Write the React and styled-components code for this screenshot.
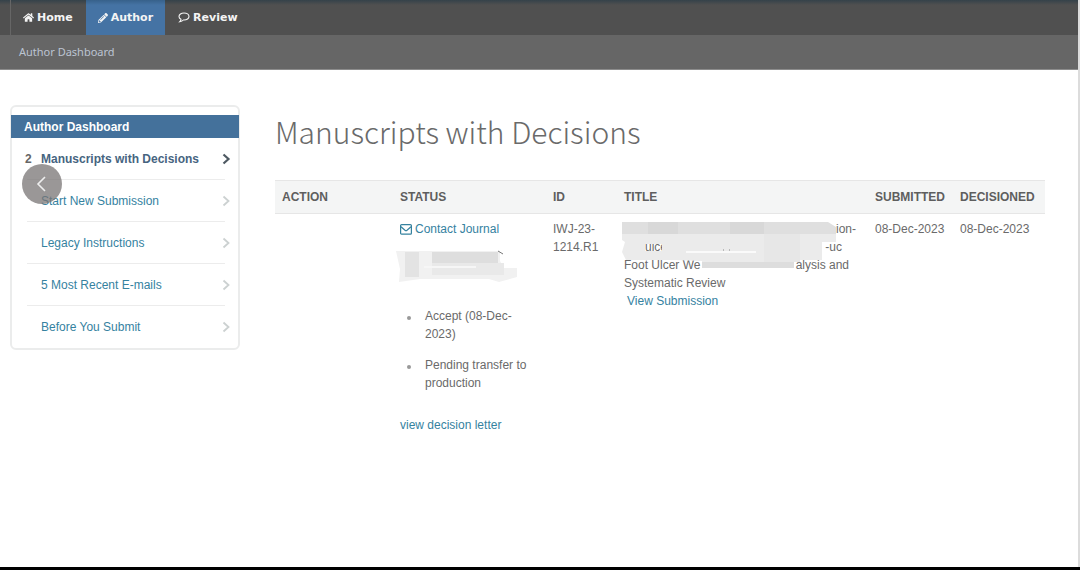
import React from 'react';
import styled, { createGlobalStyle } from 'styled-components';
import { FaHome, FaPencilAlt } from 'react-icons/fa';

const GlobalStyle = createGlobalStyle`
  * {
    box-sizing: border-box;
  }

  body {
    margin: 0;
    background: #fff;
    color: #6a6a6a;
    font: 12px/18px "Liberation Sans", Arial, sans-serif;
  }

  a {
    color: #35829f;
    text-decoration: none;
  }
`;

const Page = styled.div`
  min-height: 100vh;
  display: flex;
  flex-direction: column;
  border-bottom: 3px solid #000;
`;

const Screen = styled.div`
  flex: 1;
  border-right: 2px solid #dcdcdc;
`;

const NavBar = styled.nav`
  display: flex;
  height: 35px;
  padding-left: 10px;
  background: linear-gradient(#35424a, #505050 5px);
`;

const NavLink = styled.a`
  display: flex;
  align-items: center;
  gap: 3px;
  padding: 0 12px;
  border-left: 1px solid ${({ $divided }) => ($divided ? '#666' : 'transparent')};
  background: ${({ $active }) => ($active ? 'linear-gradient(#37618a, #4573a4 5px)' : 'none')};
  background-clip: padding-box;
  color: #f4f4f4;
  font: bold 11px/16px "DejaVu Sans", Verdana, sans-serif;
`;

const SubBar = styled.div`
  height: 35px;
  padding: 8px 19px;
  border-bottom: 1px solid #8c8c8c;
  background: #666;

  a {
    color: #bcc4d2;
    font: 11px/18px "Noto Sans", sans-serif;
  }
`;

const Body = styled.div`
  display: flex;
  align-items: flex-start;
  gap: 35px;
  padding: 35px 33px 0 10px;
`;

const Sidebar = styled.aside`
  position: relative;
  flex: 0 0 230px;
  padding-top: 8px;
  border: 2px solid #ebecec;
  border-radius: 6px;
`;

const SidebarTitle = styled.h2`
  margin: 0 -1px;
  padding: 3px 13px 2px;
  background: #44719b;
  color: #fff;
  font-size: 12px;
  line-height: 18px;
`;

const Menu = styled.ul`
  margin: 0;
  padding: 0 13px 0 15px;
  list-style: none;
`;

const MenuItem = styled.li`
  height: 42px;
  border-bottom: 1px solid #ececec;

  &:last-child {
    border-bottom: 0;
  }
`;

const MenuLink = styled.a`
  display: flex;
  align-items: center;
  height: 100%;
  margin-right: -6px;

  ${({ $current }) => $current && 'color: #46647f; font-weight: bold;'}

  svg {
    margin-left: auto;
  }
`;

const Count = styled.span`
  width: 14px;
  color: #666;
  text-indent: -2px;
`;

const BackButton = styled.button`
  position: absolute;
  top: 57px;
  left: 10px;
  display: flex;
  align-items: center;
  justify-content: center;
  width: 40px;
  height: 40px;
  padding: 0;
  border: 0;
  border-radius: 50%;
  background: rgba(120, 116, 116, 0.75);
`;

const Main = styled.main`
  flex: 1;
  min-width: 0;
`;

const Heading = styled.h1`
  margin: 4px 0 27px;
  color: #6a6a6a;
  font: 300 30px/44px "Noto Sans CJK SC", "Open Sans", sans-serif;
`;

const Table = styled.table`
  width: 100%;
  border-collapse: collapse;
  table-layout: fixed;
`;

const HeadCell = styled.th`
  width: ${({ $width }) => ($width ? `${$width}px` : 'auto')};
  padding: 7px;
  border-top: 1px solid #e6e6e6;
  border-bottom: 1px solid #e6e6e6;
  background: #f4f5f5;
  color: #5e5e5e;
  text-align: left;
  white-space: nowrap;
`;

const Cell = styled.td`
  padding: 6px 7px;
  vertical-align: top;
`;

const ContactLink = styled.a`
  display: flex;
  align-items: center;
  gap: 3px;
`;

const StatusSmudge = styled.svg`
  display: block;
  margin: 11px 0 0 -4px;
`;

const StatusList = styled.ul`
  margin: 24px 0;
  padding-left: 25px;
  list-style: none;
`;

const StatusItem = styled.li`
  display: flex;
  margin-bottom: 13px;

  &::before {
    content: '';
    flex: none;
    width: 4px;
    height: 4px;
    margin: 9px 14px 0 -18px;
    border-radius: 50%;
    background: #999;
  }
`;

const TitleText = styled.div`
  position: relative;
`;

const TitleLine = styled.div`
  display: flex;
  justify-content: space-between;
  width: ${({ $width }) => $width}px;
  padding-left: ${({ $indent }) => $indent || 0}px;
  white-space: nowrap;
`;

const TitleSmudge = styled.svg`
  position: absolute;
  top: 0;
  left: -4px;
`;

const SubmissionLink = styled.a`
  margin-left: 3px;
`;

const menu = [
  { label: 'Manuscripts with Decisions', count: 2, current: true },
  { label: 'Start New Submission' },
  { label: 'Legacy Instructions' },
  { label: '5 Most Recent E-mails' },
  { label: 'Before You Submit' },
];

const columns = [
  { label: 'ACTION', width: 118 },
  { label: 'STATUS', width: 153 },
  { label: 'ID', width: 71 },
  { label: 'TITLE' },
  { label: 'SUBMITTED', width: 85 },
  { label: 'DECISIONED', width: 92 },
];

function CommentIcon() {
  return (
    <svg width="12" height="11" viewBox="0 0 12 11" fill="none" stroke="#f4f4f4" aria-hidden="true">
      <path
        d="M6 1C3.200 1 1 2.500 1 4.500c0 1.200.8 2.200 2 2.800 0 1-.5 1.700-1.200 2.400C3.300 9.500 4.500 8.900 5.300 8H6c2.800 0 5-1.500 5-3.500S8.800 1 6 1z"
        strokeWidth="1.1"
      />
    </svg>
  );
}

function EnvelopeIcon() {
  return (
    <svg width="12" height="11" viewBox="0 0 12 11" fill="none" stroke="#35829f" aria-hidden="true">
      <rect x="0.600" y="0.600" width="10.800" height="9.600" rx="1" strokeWidth="1.2" />
      <path d="M1 2.800 5 6.200q1 .8 2 0l4-3.400" strokeWidth="1.2" />
    </svg>
  );
}

function Chevron({ current }) {
  return (
    <svg width="10" height="12" viewBox="0 0 10 12" fill="none" aria-hidden="true">
      <path
        d="M2.500 1.500 7.500 6l-5 4.500"
        stroke={current ? '#4e5962' : '#ccd1d1'}
        strokeWidth={current ? 2.2 : 1.8}
      />
    </svg>
  );
}

function SideMenu() {
  return (
    <Sidebar>
      <SidebarTitle>Author Dashboard</SidebarTitle>
      <Menu>
        {menu.map(({ label, count, current }) => (
          <MenuItem key={label}>
            <MenuLink href="#" $current={current}>
              <Count>{count}</Count>
              {label}
              <Chevron current={current} />
            </MenuLink>
          </MenuItem>
        ))}
      </Menu>
      <BackButton type="button" aria-label="Back">
        <svg width="12" height="18" viewBox="0 0 12 18" fill="none" stroke="#eee" strokeWidth="1.6">
          <path d="M9 2 2 9l7 7" />
        </svg>
      </BackButton>
    </Sidebar>
  );
}

function ManuscriptTable() {
  return (
    <Table>
      <thead>
        <tr>
          {columns.map(({ label, width }) => (
            <HeadCell key={label} $width={width} scope="col">{label}</HeadCell>
          ))}
        </tr>
      </thead>
      <tbody>
        <tr>
          <Cell />
          <Cell>
            <ContactLink href="#">
              <EnvelopeIcon />
              Contact Journal
            </ContactLink>
            <StatusSmudge width="124" height="34" viewBox="0 0 124 34" aria-hidden="true">
              <path d="M0 2h104v10l4 7h13v9l-18 5-10-3H24L3 33l1-13z" fill="#f1f1f1" />
              <path d="M9 3h14v25H9z" fill="#e3e3e3" />
              <path d="M36 3h66v11H36z" fill="#dedede" />
              <path d="M36 14h72v12H36z" fill="#e9e9e9" />
              <path d="M28 18h52" stroke="#f6f6f6" strokeWidth="2" />
              <path d="m102 2 5 3" stroke="#777" />
            </StatusSmudge>
            <StatusList>
              <StatusItem>Accept (08-Dec-2023)</StatusItem>
              <StatusItem>Pending transfer to production</StatusItem>
            </StatusList>
            <a href="#">view decision letter</a>
          </Cell>
          <Cell>IWJ-23-1214.R1</Cell>
          <Cell>
            <TitleText>
              <TitleLine $width={235} $indent={212}>ion-</TitleLine>
              <TitleLine $width={218} $indent={21}>
                <span>ulce</span>
                <span>-uc</span>
              </TitleLine>
              <TitleLine $width={225}>
                <span>Foot Ulcer We</span>
                <span>alysis and</span>
              </TitleLine>
              <div>Systematic Review</div>
              <TitleSmudge width="222" height="50" viewBox="0 0 222 50" aria-hidden="true">
                <path
                  d="M2 14h214v8h-14v18h-28v8H82v-7l-28-1H6l-4-8 3-10-3-2zM25 24v7h17v-7z"
                  fill="#ebebeb"
                  fillRule="evenodd"
                />
                <path d="M2 2h206l8 5v7H2z" fill="#dfdfdf" />
                <path d="M28 2h30v12H28zM110 2h34v12h-34z" fill="#d8d8d8" />
                <path d="M144 14h36v28h-36z" fill="#e7e7e7" />
                <path d="M82 42h92v6H82z" fill="#dddddd" />
                <path d="M66 32h70" stroke="#fafafa" strokeWidth="2" />
                <path d="M103 30h1M109 30h1" stroke="#888" />
              </TitleSmudge>
            </TitleText>
            <SubmissionLink href="#">View Submission</SubmissionLink>
          </Cell>
          <Cell>08-Dec-2023</Cell>
          <Cell>08-Dec-2023</Cell>
        </tr>
      </tbody>
    </Table>
  );
}

function App() {
  return (
    <Page>
      <GlobalStyle />
      <Screen>
        <NavBar>
          <NavLink href="#" $divided><FaHome size={11} />Home</NavLink>
          <NavLink href="#" $active><FaPencilAlt size={10} />Author</NavLink>
          <NavLink href="#"><CommentIcon />Review</NavLink>
        </NavBar>
        <SubBar>
          <a href="#">Author Dashboard</a>
        </SubBar>
        <Body>
          <SideMenu />
          <Main>
            <Heading>Manuscripts with Decisions</Heading>
            <ManuscriptTable />
          </Main>
        </Body>
      </Screen>
    </Page>
  );
}

export default App;
